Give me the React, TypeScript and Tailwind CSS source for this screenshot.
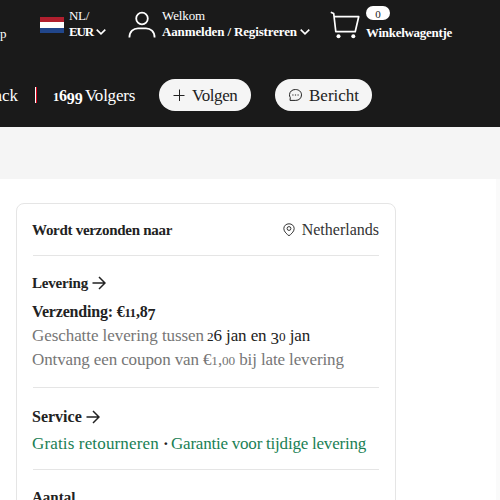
import type { ReactNode } from 'react';

function Chevron() {
  return (
    <svg width="10" height="6" viewBox="0 0 10 6" fill="none" stroke="#fff" strokeWidth="1.6" className="shrink-0">
      <path d="M.7 .7L5 4.8L9.3 .7" />
    </svg>
  );
}

function Arrow() {
  return (
    <svg width="14" height="14" viewBox="0 0 14 14" fill="none" stroke="#222" strokeWidth="1.5" className="shrink-0">
      <path d="M.5 7H13M7 1L13 7L7 13" />
    </svg>
  );
}

function Flag() {
  return (
    <div className="mt-[9px] flex h-4 w-6 shrink-0 flex-col">
      <div className="h-[5px] bg-[#b01f2e]" />
      <div className="h-[6px] bg-white" />
      <div className="h-[5px] bg-[#21468b]" />
    </div>
  );
}

function UserIcon() {
  return (
    <svg width="28" height="28" viewBox="0 0 28 28" fill="none" stroke="#fff" strokeWidth="1.8" className="shrink-0">
      <circle cx="14" cy="7.5" r="5.8" />
      <path d="M1.4 26.5C1.4 20.5 5.5 17.3 10 17.3H18C22.5 17.3 26.6 20.5 26.6 26.5" />
    </svg>
  );
}

function CartIcon() {
  return (
    <svg width="30" height="28" viewBox="0 0 30 28" fill="none" stroke="#fff" strokeWidth="1.7" className="shrink-0">
      <path d="M.8 1.2L3.7 2.5L5.8 20.7H25.2L28.7 5.7H4.2" strokeLinejoin="round" />
      <circle cx="8.5" cy="25.2" r="2" fill="#fff" stroke="none" />
      <circle cx="23.3" cy="25.2" r="2" fill="#fff" stroke="none" />
    </svg>
  );
}

function Heading({ children }: { children: ReactNode }) {
  return <div className="flex h-6 items-center text-[15px] font-bold leading-6 text-[#222]">{children}</div>;
}

/* Old-style figures: 0, 1 and 2 stay at x-height, 3, 7 and 9 hang below the baseline. */
function Figures({ value }: { value: string }) {
  return (
    <>
      {value.split('').map((c, i) =>
        '012'.includes(c) ? (
          <span key={i} className="text-[0.78em] leading-none">{c}</span>
        ) : '379'.includes(c) ? (
          <span key={i} className="align-[-0.18em] leading-none">{c}</span>
        ) : (
          c
        ),
      )}
    </>
  );
}

export default function App() {
  return (
    <div className="h-[500px] w-[500px] overflow-hidden whitespace-nowrap bg-white font-['Liberation_Serif',serif] text-[#222]">
      <header className="h-[127px] bg-[#1a1a1a] text-white">
        <div className="flex h-[79px] items-start pt-2 text-[13px] leading-4">
          <span className="mt-[18px] w-10">p</span>
          <Flag />
          <div className="ml-[5px] w-[59px]">
            <div className="tracking-[-0.31px]">NL/</div>
            <div className="flex items-center gap-[4px] font-bold">
              <span className="w-[23px] tracking-[-1.15px]">EUR</span>
              <Chevron />
            </div>
          </div>
          <div className="mt-[3px]"><UserIcon /></div>
          <div className="ml-[6px] w-[168px]">
            <div className="tracking-[-0.1px]">Welkom</div>
            <div className="flex items-center gap-[3px] font-bold">
              <span className="tracking-[-0.14px]">Aanmelden / Registreren</span>
              <Chevron />
            </div>
          </div>
          <div className="mt-[3px]"><CartIcon /></div>
          <div className="-mt-[2px] ml-[6px]">
            <div className="flex h-[14px] w-6 items-center justify-center rounded-full bg-white text-[11px] leading-none text-[#222]">
              <span className="mt-[3px]">0</span>
            </div>
            <div className="mt-[5px] font-bold tracking-[-0.29px]">Winkelwagentje</div>
          </div>
        </div>
        <div className="flex h-8 items-center text-[17px] leading-8">
          <span className="flex w-[35px] justify-end pr-[17px] pt-px">ack</span>
          <span className="h-4 w-px bg-white" />
          <span className="h-4 w-px bg-[#d3031c]" />
          <span className="ml-4 w-8 pt-px text-[16px] font-bold tracking-[-0.2px]"><Figures value="1699" /></span>
          <span className="w-[74px] pt-px tracking-[-0.23px]">Volgers</span>
          <button className="flex h-8 w-[92px] items-center rounded-full bg-[#f5f5f5] pl-[14px] text-[#222]">
            <svg width="12" height="12" viewBox="0 0 12 12" stroke="#222" strokeWidth="1">
              <path d="M.5 6.5H11.5M6.5 .5V12" />
            </svg>
            <span className="ml-[7px] pt-[2px] tracking-[-0.4px]">Volgen</span>
          </button>
          <button className="ml-6 flex h-8 w-[97px] items-center rounded-full bg-[#f5f5f5] pl-[14px] text-[#222]">
            <svg width="13" height="12" viewBox="0 0 13 12" fill="none" stroke="#222" strokeWidth="1">
              <path d="M1 11.4L1.3 8.6C.6 7.5 .4 6.6 .5 5.6C.7 2.7 3 .5 6.4 .5C9.9 .5 12.5 2.7 12.5 5.9C12.5 9.2 10 11.4 6.8 11.4Z" />
              <path d="M3.3 6H4.5M5.9 6H7.1M8.5 6H9.7" />
            </svg>
            <span className="ml-[7px] pt-[2px]">Bericht</span>
          </button>
        </div>
      </header>
      <div className="h-[52px] bg-[#f5f5f5]" />
      <div className="flex h-[321px]">
        <main className="ml-4 mt-6 h-[320px] w-[380px] shrink-0 rounded-lg border border-[#e5e5e5] px-4 pt-[14px]">
          <section className="flex h-[38px] items-start justify-between border-b border-[#e5e5e5]">
            <Heading><span className="-ml-px tracking-[-0.29px]">Wordt verzonden naar</span></Heading>
            <div className="flex h-6 items-center gap-[7px] text-[16px] leading-6 text-[#333]">
              <svg width="12" height="14" viewBox="0 0 12 14" fill="none" stroke="#333" strokeWidth="1">
                <path d="M6 12.7C4.3 11.7 .8 8.5 .8 5.7C.8 2.8 3.1 .8 6 .8C8.9 .8 11.2 2.8 11.2 5.7C11.2 8.5 7.7 11.7 6 12.7Z" />
                <circle cx="6" cy="5.5" r="1.9" />
              </svg>
              <span>Netherlands</span>
            </div>
          </section>
          <section className="h-[132px] border-b border-[#e5e5e5] pt-[15px] text-[17px] leading-6 text-[#767676]">
            <Heading><span className="mr-1 -ml-px tracking-[-0.19px]">Levering</span><Arrow /></Heading>
            <div className="-ml-px mt-[5px] h-6 text-[16px] font-bold tracking-[-0.19px] text-[#222]">Verzending: €<Figures value="11,87" /></div>
            <div className="-ml-px flex h-6">
              <span className="w-[175px] tracking-[-0.07px]">Geschatte levering tussen</span>
              <span className="tracking-[-0.11px] text-[#222]"><Figures value="26 jan en 30 jan" /></span>
            </div>
            <div className="-ml-px h-6 tracking-[-0.12px]">Ontvang een coupon van €<Figures value="1,00" /> bij late levering</div>
          </section>
          <section className="h-[82px] border-b border-[#e5e5e5] pt-[17px]">
            <Heading><span className="mr-1 -ml-px text-[16px]">Service</span><Arrow /></Heading>
            <div className="-ml-px mt-[3px] flex h-6 text-[17px] leading-6 text-[#198055]">
              <span className="w-[131px] tracking-[0.15px]">Gratis retourneren</span>
              <span className="w-2 font-bold text-[#222]">·</span>
              <span className="tracking-[-0.22px]">Garantie voor tijdige levering</span>
            </div>
          </section>
          <section className="pt-[15px]">
            <Heading><span className="-ml-px">Aantal</span></Heading>
          </section>
        </main>
        <div className="ml-auto w-1 bg-[#fafafa]" />
      </div>
    </div>
  );
}
